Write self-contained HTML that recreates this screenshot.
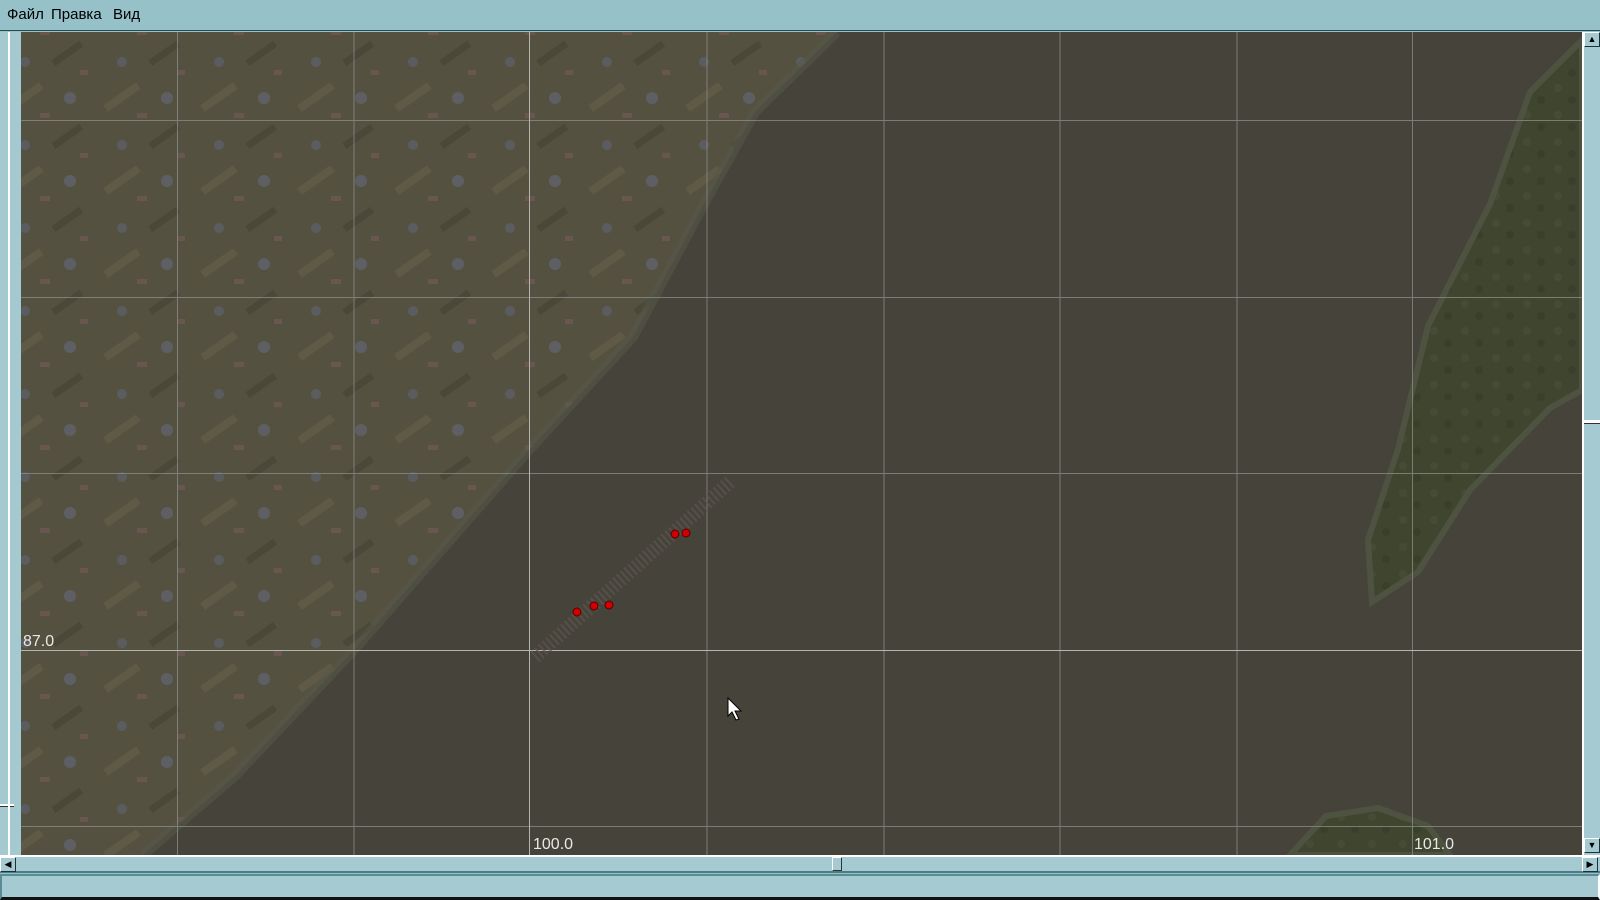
<!DOCTYPE html>
<html><head><meta charset="utf-8"><style>
*{margin:0;padding:0;box-sizing:border-box}
body{width:1600px;height:900px;background:#98c0c8;position:relative;overflow:hidden;font-family:"Liberation Sans",sans-serif}
.menu{position:absolute;left:0;top:0;width:1600px;height:31px;background:#96c1c9;border-bottom:1px solid #2a4a50;font-size:15px;color:#000}
.menu span{position:absolute;top:6px}
.left{position:absolute;left:0;top:32px;width:21px;height:823px;background:#a4c9d1}
.left:after{content:"";position:absolute;left:8px;top:0;width:2px;height:823px;background:#fff}
.map{position:absolute;left:21px;top:32px;width:1561px;height:823px;overflow:hidden;background:#46443a}
.hs{position:absolute;left:0;top:855px;width:1600px;height:18px;background:#a6cad2;border-top:2px solid #fff;border-bottom:2px solid #4c7c86}
.vs{position:absolute;left:1582px;top:32px;width:18px;height:823px;background:#a6cad2;border-left:2px solid #fff}
.btn{position:absolute;width:16px;height:15px;background:#a6cad2;border:1px solid;border-color:#fff #203038 #203038 #fff;font-size:9px;line-height:13px;text-align:center}
.status{position:absolute;left:0;top:874px;width:1600px;height:26px;background:#a6cad2;border:2px solid;border-color:#5a8c96 #fff #fff #5a8c96;border-bottom:3px solid #111}
.lbl{position:absolute;color:#e8e8e8;font-size:16px}
</style></head><body>
<div class="menu"><span style="left:7px">Файл</span><span style="left:51px">Правка</span><span style="left:113px">Вид</span></div>
<div class="left"><div style="position:absolute;left:0;top:772px;width:14px;height:3px;background:#fff;border-bottom:1px solid #333"></div></div>
<div class="map">
<svg width="1561" height="823" viewBox="21 32 1561 823" xmlns="http://www.w3.org/2000/svg">
<defs>
<pattern id="p" width="97" height="83" patternUnits="userSpaceOnUse">
<rect width="97" height="83" fill="#545140"/>
<rect x="5" y="10" width="40" height="8" fill="#5e5a46" transform="rotate(-35 25 14)"/>
<rect x="50" y="50" width="34" height="7" fill="#4a4839" transform="rotate(-35 67 53)"/>
<circle cx="70" cy="15" r="6" fill="#5d5f64"/>
<circle cx="25" cy="62" r="5" fill="#5a5c60"/>
<rect x="40" y="30" width="10" height="5" fill="#6a5650"/>
<rect x="80" y="70" width="8" height="5" fill="#6a5650"/>
</pattern>
<pattern id="f" width="31" height="27" patternUnits="userSpaceOnUse">
<rect width="31" height="27" fill="#40452f"/><circle cx="8" cy="7" r="4" fill="#464b35"/><circle cx="22" cy="19" r="4" fill="#3a3f2b"/>
</pattern>
</defs>
<polygon points="21,32 837,32 755,112 704,204 633,337 530,449 354,650 235,776 143,855 21,855" fill="url(#p)"/>
<polyline points="837,32 755,112 704,204 633,337 530,449 354,650 235,776 143,855" fill="none" stroke="#55584a" stroke-width="10" opacity="0.5"/>
<polygon points="1582,40 1530,92 1490,204 1428,326 1398,449 1368,540 1372,602 1418,572 1470,490 1550,408 1582,390" fill="url(#f)" stroke="#4e5240" stroke-width="6"/>
<polygon points="1290,855 1326,816 1378,808 1428,826 1450,855" fill="url(#f)" stroke="#4e5240" stroke-width="6"/>
<g stroke="#8a8a86" stroke-width="1" opacity="0.8">
<line x1="177.5" y1="32" x2="177.5" y2="855"/><line x1="354" y1="32" x2="354" y2="855"/>
<line x1="707" y1="32" x2="707" y2="855"/><line x1="884" y1="32" x2="884" y2="855"/><line x1="1060" y1="32" x2="1060" y2="855"/>
<line x1="1237" y1="32" x2="1237" y2="855"/><line x1="1412.5" y1="32" x2="1412.5" y2="855"/>
<line x1="21" y1="120.5" x2="1582" y2="120.5"/><line x1="21" y1="297.5" x2="1582" y2="297.5"/><line x1="21" y1="473.5" x2="1582" y2="473.5"/><line x1="21" y1="826.5" x2="1582" y2="826.5"/>
</g>
<g stroke="#b4b4b0" stroke-width="1"><line x1="529.5" y1="32" x2="529.5" y2="855"/><line x1="21" y1="650.5" x2="1582" y2="650.5"/></g>
<line x1="535" y1="657" x2="730" y2="482" stroke="#5e5452" stroke-width="14" stroke-dasharray="2 3" opacity="0.7"/>
<g fill="#d00000" stroke="#500" stroke-width="1">
<circle cx="577" cy="612" r="4"/><circle cx="594" cy="606" r="4"/><circle cx="609" cy="605" r="4"/><circle cx="675" cy="534" r="4"/><circle cx="686" cy="533" r="4"/>
</g>
<path d="M728,698 L728,716 L732,712 L736,720 L739,719 L735,711 L741,711 Z" fill="#fff" stroke="#000" stroke-width="1"/>
</svg>
<div class="lbl" style="left:2px;top:601px">87.0</div>
<div class="lbl" style="left:512px;top:804px">100.0</div>
<div class="lbl" style="left:1393px;top:804px">101.0</div>
</div>
<div class="vs">
<div class="btn" style="left:0;top:0">▲</div>
<div style="position:absolute;left:0;top:388px;width:16px;height:4px;background:#fff;border-bottom:1px solid #333"></div>
<div class="btn" style="left:0;top:806px">▼</div>
</div>
<div class="hs">
<div class="btn" style="left:0;top:0">◀</div>
<div style="position:absolute;left:832px;top:0;width:10px;height:14px;border:1px solid;border-color:#fff #333 #333 #fff"></div>
<div class="btn" style="left:1582px;top:0">▶</div>
</div>
<div class="status"></div>
</body></html>
